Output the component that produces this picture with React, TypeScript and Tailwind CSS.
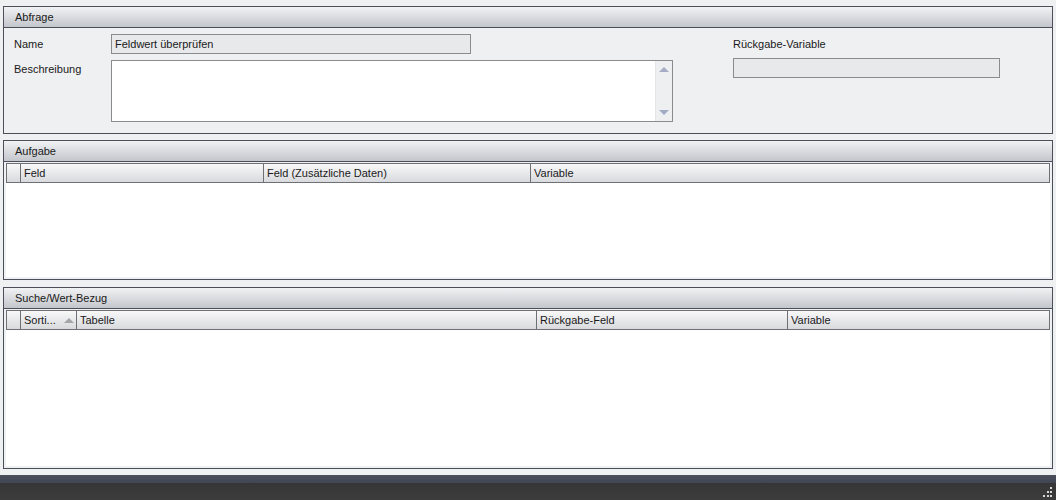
import React from "react";

const font = { fontFamily: '"Liberation Sans", Arial, sans-serif' };

function SectionHeader({ title }: { title: string }) {
  return (
    <div className="h-[21px] shrink-0 border-b border-[#4b4f5a] bg-gradient-to-b from-[#f1f2f4] to-[#c3c6cb] pl-[11px] flex items-center text-[#1a1a1a]">
      {title}
    </div>
  );
}

function GridHeader({ cols }: { cols: { label: string; w?: number; sort?: boolean }[] }) {
  return (
    <div className="h-[20px] shrink-0 flex border border-[#6e7076] bg-gradient-to-b from-[#f8f8f9] to-[#d9dadd]">
      <div className="w-[14px] shrink-0 border-r border-[#6e7076]" />
      {cols.map((c, i) => (
        <div
          key={i}
          className={
            "flex items-center pl-[3px] text-[#1a1a1a] " +
            (c.w ? "shrink-0 border-r border-[#6e7076]" : "flex-1")
          }
          style={c.w ? { width: c.w } : undefined}
        >
          <span>{c.label}</span>
          {c.sort && (
            <svg width="10" height="5" viewBox="0 0 10 5" className="ml-[8px]">
              <polygon points="0,5 10,5 5,0" fill="#a3a5a9" />
            </svg>
          )}
        </div>
      ))}
    </div>
  );
}

export default function App() {
  return (
    <div
      className="w-[1056px] h-[500px] bg-[#eff0f2] flex flex-col text-[11px] overflow-hidden"
      style={font}
    >
      <div className="flex-1 flex flex-col pt-[6px] px-[3px] gap-[6px]">
        {/* Abfrage */}
        <div className="h-[128px] shrink-0 border border-[#4b4f5a] flex flex-col">
          <SectionHeader title="Abfrage" />
          <div className="flex pt-[6px] pl-[10px]">
            <div className="grid grid-cols-[97px_auto] gap-y-[6px]">
              <div className="h-[20px] flex items-center text-[#1a1a1a]">Name</div>
              <div className="w-[360px] h-[20px] border border-[#8b8c8f] bg-[#e8e9eb] flex items-center pl-[3px] text-[#1a1a1a]">
                Feldwert überprüfen
              </div>
              <div className="pt-[1px] text-[#1a1a1a]">Beschreibung</div>
              <div className="w-[562px] h-[62px] border border-[#8b8c8f] bg-white flex">
                <div className="flex-1" />
                <div className="w-[17px] border-l border-[#e6e6e6] bg-[#eeeff1] flex flex-col items-center justify-between py-[6px]">
                  <svg width="10" height="5" viewBox="0 0 10 5">
                    <polygon points="0,5 10,5 5,0" fill="#a4abc5" />
                  </svg>
                  <svg width="10" height="5" viewBox="0 0 10 5">
                    <polygon points="0,0 10,0 5,5" fill="#a4abc5" />
                  </svg>
                </div>
              </div>
            </div>
            <div className="ml-[60px] flex flex-col gap-[4px]">
              <div className="h-[20px] flex items-center text-[#1a1a1a]">Rückgabe-Variable</div>
              <div className="w-[267px] h-[20px] border border-[#8b8c8f] bg-[#e8e9eb]" />
            </div>
          </div>
        </div>

        {/* Aufgabe */}
        <div className="h-[140px] shrink-0 border border-[#4b4f5a] flex flex-col">
          <SectionHeader title="Aufgabe" />
          <div className="flex-1 mx-[2px] mt-[1px] mb-[2px] bg-white flex flex-col">
            <GridHeader
              cols={[
                { label: "Feld", w: 243 },
                { label: "Feld (Zusätzliche Daten)", w: 267 },
                { label: "Variable" },
              ]}
            />
          </div>
        </div>

        {/* Suche/Wert-Bezug */}
        <div className="h-[182px] shrink-0 mt-[1px] border border-[#4b4f5a] flex flex-col">
          <SectionHeader title="Suche/Wert-Bezug" />
          <div className="flex-1 mx-[2px] mt-[1px] mb-[2px] bg-white flex flex-col">
            <GridHeader
              cols={[
                { label: "Sorti...", w: 56, sort: true },
                { label: "Tabelle", w: 460 },
                { label: "Rückgabe-Feld", w: 251 },
                { label: "Variable" },
              ]}
            />
          </div>
        </div>
      </div>

      {/* bottom bar */}
      <div className="h-[25px] shrink-0 flex flex-col">
        <div className="h-[8px] bg-gradient-to-b from-[#4b4f5c] to-[#424654]" />
        <div className="flex-1 bg-gradient-to-b from-[#363636] to-[#3c3c3c] flex justify-end items-end pr-[3px] pb-[2px]">
          <svg width="12" height="12" viewBox="0 0 12 12">
            <rect x="9" y="1" width="2" height="2" fill="#d8d8d8" />
            <rect x="6" y="5" width="2" height="2" fill="#d8d8d8" />
            <rect x="9" y="5" width="2" height="2" fill="#d8d8d8" />
            <rect x="2" y="9" width="2" height="2" fill="#d8d8d8" />
            <rect x="6" y="9" width="2" height="2" fill="#d8d8d8" />
            <rect x="9" y="9" width="2" height="2" fill="#d8d8d8" />
          </svg>
        </div>
      </div>
    </div>
  );
}
